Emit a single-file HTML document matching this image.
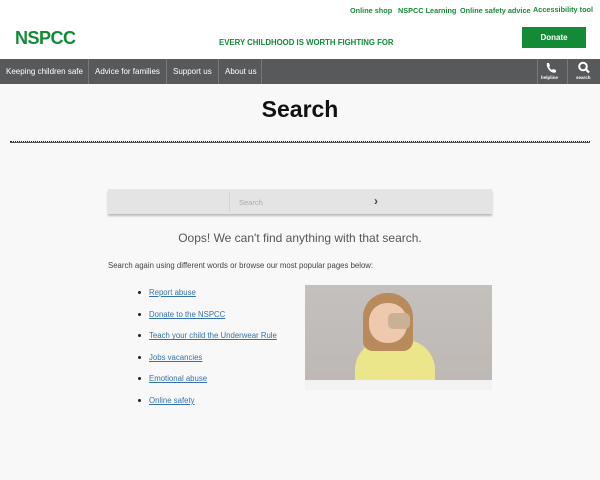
<!DOCTYPE html>
<html><head><style>
*{margin:0;padding:0;box-sizing:border-box}
body{width:600px;height:480px;overflow:hidden;background:#f8f8f8;font-family:"Liberation Sans",sans-serif;position:relative}
.hdr{position:absolute;left:0;top:0;width:600px;height:59px;background:#fff}
.top{position:absolute;top:6px;font-size:7.3px;color:#1a8a3a;font-weight:bold}
.logo{position:absolute;left:15px;top:28px;font-size:18px;font-weight:bold;color:#138a36;letter-spacing:-0.5px}
.tag{position:absolute;left:219px;top:38px;font-size:7.8px;font-weight:bold;color:#138a36}
.don{position:absolute;left:522px;top:27px;width:64px;height:21px;background:#138a36;color:#fff;font-size:8px;font-weight:bold;text-align:center;line-height:21px}
.nav{position:absolute;left:0;top:59px;width:600px;height:25px;background:#58595b}
.ni{position:absolute;top:0;height:25px;line-height:25px;color:#fff;font-size:8px;border-right:1px solid #777;padding-left:6px}
h1{position:absolute;left:0;width:600px;top:96px;text-align:center;font-size:23px;font-weight:bold;color:#111}
.line{position:absolute;left:10px;top:141px;width:580px;height:2px;border-top:1px dotted #222;border-bottom:1px solid #555}
.sb{position:absolute;left:108px;top:189px;width:384px;height:25px;background:#e4e4e4;box-shadow:0 2px 2px #bbb}
.oops{position:absolute;left:0;width:600px;top:231px;text-align:center;font-size:12px;color:#555}
.p{position:absolute;left:108px;top:261px;font-size:7.8px;color:#444}
ul{position:absolute;left:138px;top:288px;list-style:none}
li{height:21.6px;font-size:7.8px;position:relative;padding-left:11px}
li:before{content:"";position:absolute;left:0;top:3px;width:3px;height:3px;background:#222;border-radius:50%}
li a{color:#3672a8;text-decoration:underline}
.img{position:absolute;left:305px;top:285px;width:187px;height:105px;background:linear-gradient(#c4c0bd,#bdb8b4);overflow:hidden}
</style></head><body>
<div class="hdr"></div>
<div class="top" style="left:350px">Online shop</div>
<div class="top" style="left:398px">NSPCC Learning</div>
<div class="top" style="left:460px">Online safety advice</div>
<div class="top" style="left:533px;top:5px">Accessibility tool</div>
<div class="logo">NSPCC</div>
<div class="tag">EVERY CHILDHOOD IS WORTH FIGHTING FOR</div>
<div class="don">Donate</div>
<div class="nav">
<div class="ni" style="left:0;width:89px">Keeping children safe</div>
<div class="ni" style="left:89px;width:78px">Advice for families</div>
<div class="ni" style="left:167px;width:52px">Support us</div>
<div class="ni" style="left:219px;width:43px">About us</div>
<div style="position:absolute;left:537px;top:0;width:1px;height:25px;background:#777"></div>
<div style="position:absolute;left:567px;top:0;width:1px;height:25px;background:#777"></div>
<svg style="position:absolute;left:544px;top:3px" width="14" height="12" viewBox="0 0 14 12"><path d="M3 1 L5 1 L6 4 L5 5 Q6 7 8 8 L9 7 L12 8 L12 10 Q10 12 6 9 Q2 5 3 1Z" fill="#fff"/></svg>
<svg style="position:absolute;left:577px;top:2px" width="14" height="13" viewBox="0 0 14 13"><circle cx="6" cy="5.5" r="3.8" stroke="#fff" stroke-width="2" fill="none"/><path d="M9 8.5 L12 11.5" stroke="#fff" stroke-width="2.2"/></svg>
<div style="position:absolute;left:541px;top:16px;font-size:4.5px;color:#fff;font-weight:bold">helpline</div>
<div style="position:absolute;left:576px;top:16px;font-size:4.5px;color:#fff;font-weight:bold">search</div>
</div>
<h1>Search</h1>
<div class="line"></div>
<div class="sb"><div style="position:absolute;left:121px;top:3px;width:1px;height:20px;background:#d4d4d4"></div>
<div style="position:absolute;left:131px;top:9px;font-size:7.5px;color:#aaa">Search</div>
<div style="position:absolute;left:266px;top:5px;font-size:12px;line-height:14px;color:#444;font-weight:bold">›</div></div>
<div class="oops">Oops! We can't find anything with that search.</div>
<div class="p">Search again using different words or browse our most popular pages below:</div>
<ul><li><a>Report abuse</a></li><li><a>Donate to the NSPCC</a></li><li><a>Teach your child the Underwear Rule</a></li><li><a>Jobs vacancies</a></li><li><a>Emotional abuse</a></li><li><a>Online safety</a></li></ul>
<div class="img">
<div style="position:absolute;left:50px;top:55px;width:80px;height:50px;background:#ece68a;border-radius:30px 30px 0 0"></div>
<div style="position:absolute;left:58px;top:8px;width:50px;height:58px;background:#b98a5c;border-radius:24px 24px 10px 10px"></div>
<div style="position:absolute;left:64px;top:18px;width:38px;height:40px;background:#efc9ad;border-radius:18px"></div>
<div style="position:absolute;left:83px;top:28px;width:22px;height:16px;background:#c9b196;border-radius:5px"></div>
<div style="position:absolute;left:0;top:95px;width:187px;height:10px;background:#f2f2f2"></div>
</div>
</body></html>
